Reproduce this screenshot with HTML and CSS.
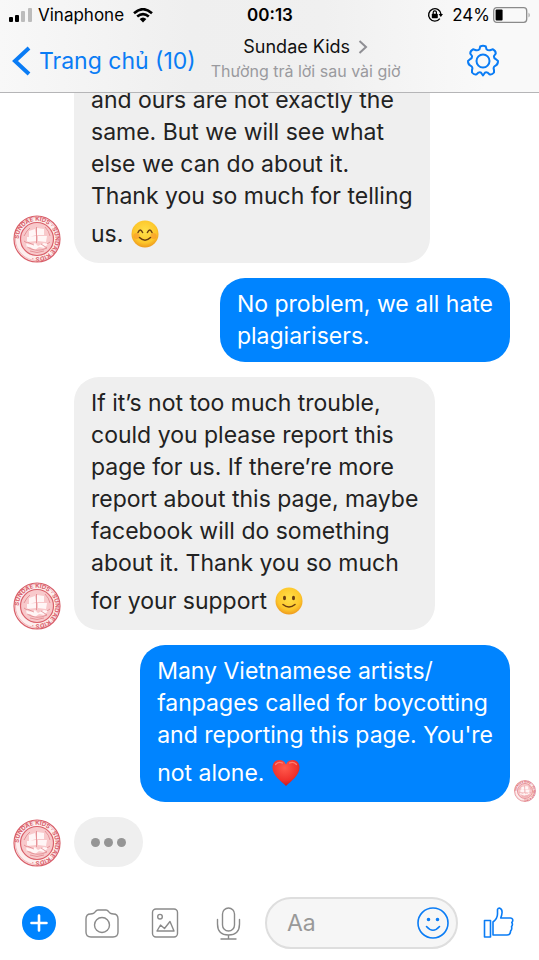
FILE: index.html
```
<!DOCTYPE html>
<html lang="vi">
<head>
<meta charset="utf-8">
<meta name="viewport" content="width=device-width, initial-scale=1">
<title>Sundae Kids</title>
<link rel="stylesheet" href="styles.css">
</head>
<body>

<!-- shared drawings -->
<svg class="defs" width="0" height="0" aria-hidden="true">
  <defs>
    <radialGradient id="face" cx="50%" cy="40%" r="60%">
      <stop offset="0" stop-color="#ffe04a"/>
      <stop offset="0.7" stop-color="#fdc72b"/>
      <stop offset="1" stop-color="#ee9a1c"/>
    </radialGradient>
    <radialGradient id="heart" cx="45%" cy="30%" r="70%">
      <stop offset="0" stop-color="#ff5a4c"/>
      <stop offset="0.7" stop-color="#f0302b"/>
      <stop offset="1" stop-color="#c41a1f"/>
    </radialGradient>
    <path id="ring" d="M5.8 24a18.2 18.2 0 1 1 36.4 0a18.2 18.2 0 1 1 -36.4 0"/>
    <symbol id="seal" viewBox="0 0 48 48">
      <circle cx="24" cy="24" r="23" fill="#fdeeee" stroke="#d9606a" stroke-width="1.2"/>
      <circle cx="24" cy="24" r="21.6" fill="none" stroke="#eda5aa" stroke-width="0.7"/>
      <text class="seal-text"><textPath href="#ring">SUNDAE KIDS · SUNDAE KIDS ·</textPath></text>
      <circle cx="24" cy="24" r="16.5" fill="#f8c9cb" stroke="#d9606a" stroke-width="1.2"/>
      <path d="M16 16l6-2 1 6-7 2zM24 13l7 1v6l-7 0zM14 22l9-1v5l-9 1zM25 21l9 0-1 6-8-1z" fill="#fff6f6"/>
      <path d="M13 28q5 3 9 0l3 3 6-3 4 1-4 4-5-1-4 3-5-3-3 1z" fill="#fff6f6"/>
      <path d="M23.5 12v16M14 27l7 3M28 29l6 4M14 32q10 6 20 1M17 36q7 3 14 0M11 21q3-6 6-8M32 12q4 4 5 9M11 26l3 2M34 29l3-2" fill="none" stroke="#dd7b82" stroke-width="0.7"/>
    </symbol>
  </defs>
</svg>

<div class="app">
  <header class="header">
    <div class="status">
      <div class="status-side">
        <svg width="24" height="16" viewBox="0 0 24 16" aria-hidden="true">
          <rect x="0" y="10" width="4" height="5" rx="1"/>
          <rect x="6" y="8" width="4" height="7" rx="1"/>
          <rect x="12" y="4" width="4" height="11" rx="1" fill="#bcbcbc"/>
          <rect x="19" y="1" width="4" height="14" rx="1" fill="#bcbcbc"/>
        </svg>
        <span class="carrier">Vinaphone</span>
        <svg class="wifi" width="20" height="15" viewBox="0 0 20 15" aria-hidden="true">
          <path d="M1 5.2Q10-2.8 19 5.2M4.2 8.6Q10 3.6 15.8 8.6" fill="none" stroke="#000" stroke-width="2.6"/>
          <path d="M6.6 11Q10 8 13.4 11L10 14.6z"/>
        </svg>
      </div>
      <span class="clock">00:13</span>
      <div class="status-side status-right">
        <svg width="16" height="16" viewBox="0 0 16 16" aria-hidden="true">
          <path d="M12.8 11.6A6.2 6.2 0 1 1 14 7.4" fill="none" stroke="#000" stroke-width="1.4"/>
          <path d="M11.6 7h4.4l-2.2 3z"/>
          <rect x="4.8" y="6.8" width="6" height="4.4" rx="0.6"/>
          <path d="M6.2 7V5.4a1.6 1.6 0 0 1 3.2 0V7" fill="none" stroke="#000" stroke-width="1.2"/>
        </svg>
        <span class="percent">24%</span>
        <svg width="38" height="16" viewBox="0 0 38 16" aria-hidden="true">
          <rect x="0.7" y="0.7" width="33" height="14.6" rx="3" fill="none" stroke="#8b8b8b" stroke-width="1.3"/>
          <rect x="2.6" y="2.6" width="7" height="10.8" rx="1"/>
          <path d="M35.6 5.4q2 2.6 0 5.2z" fill="#8b8b8b"/>
        </svg>
      </div>
    </div>
    <nav class="nav">
      <a class="back" href="#">
        <svg width="20" height="32" viewBox="0 0 20 32" aria-hidden="true">
          <path d="M17 3L3 16l14 13" fill="none" stroke="#0a7cf5" stroke-width="4"/>
        </svg>
        <span>Trang chủ (10)</span>
      </a>
      <a class="title" href="#">
        <span class="name">Sundae Kids
          <svg width="10" height="14" viewBox="0 0 10 14" aria-hidden="true"><path d="M1.5 1l6.5 6-6.5 6" fill="none" stroke="#8f8f94" stroke-width="2"/></svg>
        </span>
        <span class="reply-time">Thường trả lời sau vài giờ</span>
      </a>
      <button class="icon-button gear" aria-label="Cài đặt">
        <svg width="34" height="34" viewBox="0 0 34 34" fill="none" stroke="#0a7cf5" stroke-width="2" stroke-linejoin="round">
          <path d="M14.2 2.5Q17 1 19.8 2.5L20.5 5.2Q22.5 7 24.7 6L27 5.3Q30 7 29.7 9.700L28 12Q27.6 14.4 30 15.3L32 17Q32 20.5 29.6 21.6L28.6 22.3Q27 23.6 28 26L28 28.5Q26 31 23.4 30.3L21.5 28.6Q19.2 27.6 18 30L17 31.5L16 30Q14.8 27.6 12.5 28.6L10.6 30.3Q8 31 6 28.5L6 26Q7 23.6 5.4 22.3L4.4 21.6Q2 20.5 2 17L4 15.3Q6.4 14.4 6 12L4.3 9.7Q4 7 7 5.3L9.3 6Q11.5 7 13.5 5.2z"/>
          <circle cx="17" cy="17" r="6.5"/>
        </svg>
      </button>
    </nav>
  </header>

  <main class="thread">
    <div class="row row-cut">
      <svg class="avatar" role="img" aria-label="Sundae Kids"><use href="#seal"/></svg>
      <p class="bubble">and ours are not exactly the<br>same. But we will see what<br>else we can do about it.<br>Thank you so much for telling<br>
        <span class="emoji-line">us.
          <svg class="emoji" viewBox="0 0 28 28" role="img" aria-label="😊">
            <circle cx="14" cy="14" r="13.5" fill="url(#face)"/>
            <circle cx="5.5" cy="16" r="3" fill="#f78b2c" opacity="0.5"/>
            <circle cx="22.5" cy="16" r="3" fill="#f78b2c" opacity="0.5"/>
            <path d="M7 12.5q2.2-5 4.6 0M16.4 12.5q2.400-5 4.6 0M8.5 17.5q5.500 5.5 11 0" fill="none" stroke="#6b3d10" stroke-width="1.5" stroke-linecap="round"/>
          </svg></span></p>
    </div>

    <div class="row row-mine">
      <p class="bubble bubble-mine">No problem, we all hate<br>plagiarisers.</p>
    </div>

    <div class="row">
      <svg class="avatar" role="img" aria-label="Sundae Kids"><use href="#seal"/></svg>
      <p class="bubble">If it’s not too much trouble,<br>could you please report this<br>page for us. If there’re more<br>report about this page, maybe<br>facebook will do something<br>about it. Thank you so much<br>
        <span class="emoji-line">for your support
          <svg class="emoji" viewBox="0 0 28 28" role="img" aria-label="🙂">
            <circle cx="14" cy="14" r="13.5" fill="url(#face)"/>
            <ellipse cx="9.5" cy="11" rx="1.5" ry="2.2" fill="#6b3d10"/>
            <ellipse cx="18.5" cy="11" rx="1.5" ry="2.2" fill="#6b3d10"/>
            <path d="M8 17.5q6 5 12 0" fill="none" stroke="#6b3d10" stroke-width="1.5" stroke-linecap="round"/>
          </svg></span></p>
    </div>

    <div class="row row-mine">
      <p class="bubble bubble-mine">Many Vietnamese artists/<br>fanpages called for boycotting<br>and reporting this page. You're<br>
        <span class="emoji-line">not alone.
          <svg class="emoji" viewBox="0 0 28 28" role="img" aria-label="❤️">
            <path d="M14 27C9 22 0.5 16.5 0.5 8.5C0.5 4 3.5 1 7.3 1C10.5 1 12.8 2.8 14 5.5C15.2 2.8 17.5 1 20.7 1C24.5 1 27.5 4 27.5 8.5C27.5 16.5 19 22 14 27z" fill="url(#heart)"/>
            <path d="M3.5 5.5q3-3.5 7-1.5M17.5 4q4-2 7 1.5" fill="none" stroke="#ff9b8d" stroke-width="1.2" stroke-linecap="round" opacity="0.7"/>
          </svg></span></p>
      <svg class="seen" role="img" aria-label="Đã xem"><use href="#seal"/></svg>
    </div>

    <div class="row">
      <svg class="avatar" role="img" aria-label="Sundae Kids"><use href="#seal"/></svg>
      <div class="bubble typing"><i class="dot"></i><i class="dot"></i><i class="dot"></i></div>
    </div>
  </main>

  <form class="composer">
    <div class="tools">
      <button class="icon-button" type="button" aria-label="Thêm">
        <svg width="34" height="34" viewBox="0 0 34 34"><circle cx="17" cy="17" r="17" fill="#0084ff"/><path d="M17 9.5v15M9.5 17h15" stroke="#fff" stroke-width="2.6" stroke-linecap="round"/></svg>
      </button>
      <button class="icon-button" type="button" aria-label="Máy ảnh">
        <svg width="34" height="34" viewBox="0 0 34 34" fill="none" stroke="#8a8a8a" stroke-width="1.4">
          <path d="M1 13Q1 8 5.5 8Q9 8 10.5 5.5Q11.5 4 13 4H21Q22.5 4 23.5 5.5Q25 8 28.5 8Q33 8 33 13V26Q33 31 28 31H6Q1 31 1 26z"/>
          <circle cx="17" cy="19" r="7.5"/>
        </svg>
      </button>
      <button class="icon-button" type="button" aria-label="Ảnh">
        <svg width="34" height="34" viewBox="0 0 34 34" fill="none" stroke="#8a8a8a" stroke-width="1.4" stroke-linejoin="round">
          <rect x="4.5" y="3" width="25" height="28" rx="3.5"/>
          <circle cx="12" cy="10.7" r="2.3"/>
          <path d="M9 25L12.5 19L16.5 22.5L22 15.5L26 25z"/>
        </svg>
      </button>
      <button class="icon-button" type="button" aria-label="Ghi âm">
        <svg width="34" height="34" viewBox="0 0 34 34" fill="none" stroke="#8a8a8a" stroke-width="1.4" stroke-linecap="round">
          <rect x="11.5" y="2" width="12" height="23" rx="6"/>
          <path d="M6.5 13.5V18Q6.5 29 17.5 29Q28.5 29 28.5 18V13.5M17.5 29v4M10 33h15"/>
        </svg>
      </button>
    </div>
    <div class="field">
      <input class="input" type="text" placeholder="Aa" aria-label="Tin nhắn">
      <button class="icon-button smile" type="button" aria-label="Biểu tượng cảm xúc">
        <svg width="32" height="32" viewBox="0 0 32 32" fill="none" stroke="#0a7cf5" stroke-width="1.6" stroke-linecap="round">
          <circle cx="16" cy="16" r="15"/>
          <path d="M9.5 19.5q6.5 7.5 13 0"/>
          <circle cx="11.5" cy="12.5" r="1" fill="#0a7cf5"/>
          <circle cx="20.5" cy="12.5" r="1" fill="#0a7cf5"/>
        </svg>
      </button>
    </div>
    <button class="icon-button" type="button" aria-label="Thích">
      <svg width="34" height="34" viewBox="0 0 34 34" fill="none" stroke="#0a7cf5" stroke-width="1.6" stroke-linejoin="round">
        <rect x="3.5" y="14.5" width="6" height="16.5"/>
        <path d="M12 16Q16.5 12.5 16.5 8V3.5Q17 2 18.5 2Q21.5 3 21 7Q20.8 9.5 19.7 12H29.5Q32.5 12.5 31.5 15.5L30.8 16.5Q32.2 18.5 30.5 20.8Q31.3 23 29.6 25Q29.5 29 26 29H12z"/>
      </svg>
    </button>
  </form>
</div>

</body>
</html>
```
FILE: styles.css
```
* { box-sizing: border-box; }
body {
  margin: 0;
  background: #fff;
  color: #222;
  font-family: Inter, "Liberation Sans", sans-serif;
}
svg { display: block; flex: none; }
a { color: inherit; text-decoration: none; }
.defs { position: absolute; }

.app {
  display: flex;
  flex-direction: column;
  height: 100vh;
}

/* top bar */
.header {
  flex: none;
  border-bottom: 1px solid #b5b5b7;
  background: linear-gradient(to right, #f8f8f8, #efefef 35%, #f0f0f0 60%, #f9f9f9 90%);
}
.status {
  display: flex;
  align-items: center;
  height: 30px;
  padding: 0 8px 0 9px;
  color: #000;
  font-size: 17px;
}
.status-side {
  display: flex;
  flex: 1;
  align-items: center;
}
.status-right { justify-content: flex-end; }
.carrier { margin: 0 9px 0 5px; }
.clock { font-weight: 600; }
.percent { margin: 0 3px 0 9px; }

.nav {
  display: flex;
  align-items: center;
  height: 62px;
  padding: 0 39px 0 12px;
}
.back {
  display: flex;
  align-items: center;
  gap: 7px;
  color: #0a7cf5;
  font-size: 23px;
  white-space: nowrap;
}
.title {
  display: flex;
  flex-direction: column;
  align-items: center;
  margin-left: 15px;
  padding-bottom: 4px;
  white-space: nowrap;
}
.name {
  display: flex;
  align-items: center;
  gap: 8px;
  color: #111;
  font-size: 18px;
  line-height: 24px;
}
.reply-time {
  color: #9a9a9e;
  font-size: 16px;
  line-height: 24px;
}
.icon-button {
  flex: none;
  padding: 0;
  border: 0;
  background: none;
}
.gear { margin-left: auto; }

/* messages */
.thread {
  display: flex;
  flex: 1;
  flex-direction: column;
  justify-content: flex-end;
  gap: 15px;
  min-height: 0;
  padding-bottom: 16px;
  overflow: hidden;
}
.row {
  display: flex;
  flex: none;
  align-items: flex-end;
  gap: 13px;
  padding: 0 29px 0 13px;
}
.row-mine {
  position: relative;
  justify-content: flex-end;
}
.bubble {
  margin: 0;
  padding: 10px 17px;
  border-radius: 25px;
  background: #efefef;
  font-size: 23px;
  line-height: 32px;
  white-space: nowrap;
}
.bubble-mine {
  background: #0084ff;
  color: #fff;
}
.row-cut .bubble { padding-top: 42px; }
.avatar {
  width: 48px;
  height: 48px;
}
.seal-text {
  fill: #d9606a;
  font-size: 6px;
  font-weight: 700;
}
.emoji-line {
  display: flex;
  align-items: center;
  gap: 8px;
  height: 41px;
  padding-top: 2px;
}
.emoji {
  width: 28px;
  height: 28px;
}
.seen {
  position: absolute;
  right: 3px;
  bottom: 0;
  width: 22px;
  height: 22px;
}
.typing {
  display: flex;
  align-items: center;
  gap: 4px;
  height: 50px;
}
.dot {
  width: 9px;
  height: 9px;
  border-radius: 50%;
  background: #959595;
}

/* bottom bar */
.composer {
  display: flex;
  flex: none;
  align-items: center;
  padding: 14px 24px 11px 22px;
}
.tools {
  display: flex;
  gap: 29px;
}
.field {
  display: flex;
  flex: 1;
  align-items: center;
  min-width: 0;
  height: 52px;
  margin: 0 23px 0 20px;
  padding: 0 7px 0 20px;
  border: 2px solid #dedede;
  border-radius: 26px;
  background: #f6f6f6;
}
.input {
  flex: 1;
  min-width: 0;
  padding: 0;
  border: 0;
  outline: 0;
  background: none;
  color: #222;
  font: 23px Inter, "Liberation Sans", sans-serif;
}
.input::placeholder { color: #999; }
```
